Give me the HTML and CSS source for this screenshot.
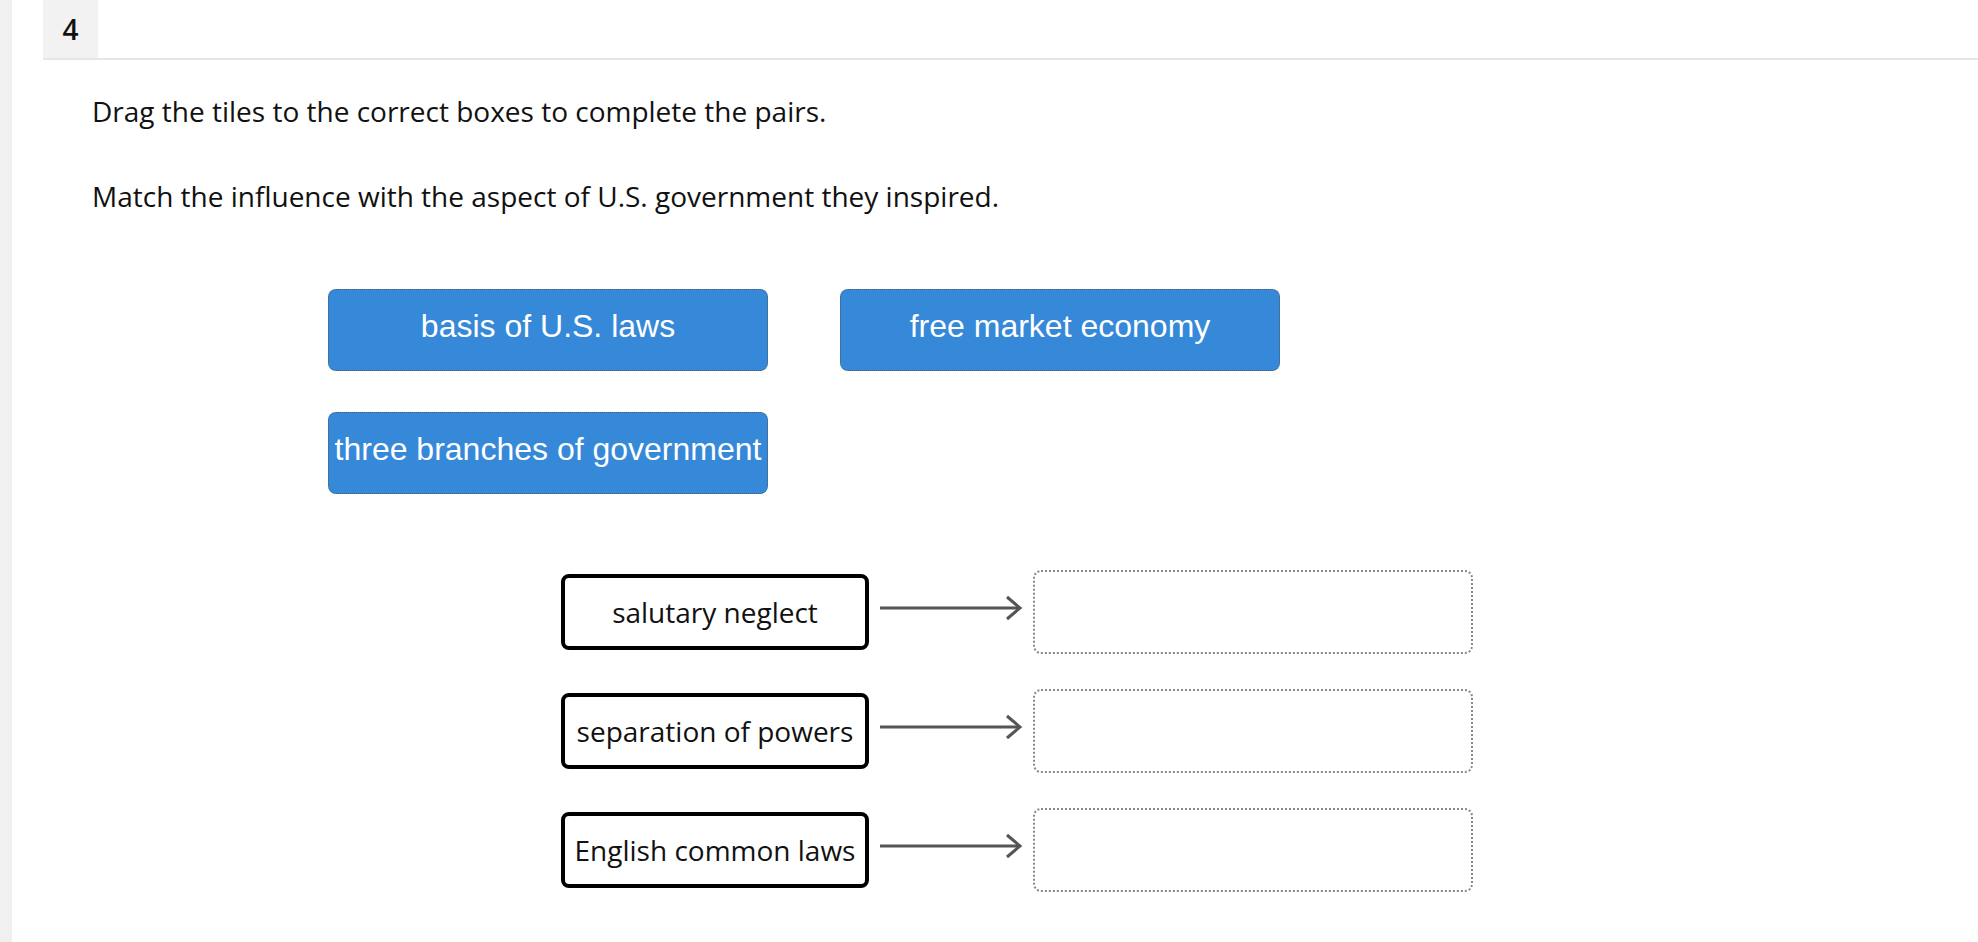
FILE: index.html
```html
<!DOCTYPE html>
<html>
<head>
<meta charset="utf-8">
<link rel="stylesheet" href="styles.css">
</head>
<body>
<div class="strip"></div>
<div class="main">
  <div class="header"><div class="num">4</div></div>
  <div class="content">
    <p class="q q1">Drag the tiles to the correct boxes to complete the pairs.</p>
    <p class="q q2">Match the influence with the aspect of U.S. government they inspired.</p>
    <div class="tiles">
      <div class="tile">basis of U.S. laws</div>
      <div class="tile">free market economy</div>
      <div class="tile">three branches of government</div>
    </div>
    <div class="pairs">
      <div class="pair">
        <div class="term">salutary neglect</div>
        <svg class="arrow" width="144" height="26" viewBox="0 0 144 26"><line x1="1" y1="13" x2="141" y2="13"/><polyline points="128,2 141,13 128,24"/></svg>
        <div class="drop"></div>
      </div>
      <div class="pair">
        <div class="term">separation of powers</div>
        <svg class="arrow" width="144" height="26" viewBox="0 0 144 26"><line x1="1" y1="13" x2="141" y2="13"/><polyline points="128,2 141,13 128,24"/></svg>
        <div class="drop"></div>
      </div>
      <div class="pair">
        <div class="term">English common laws</div>
        <svg class="arrow" width="144" height="26" viewBox="0 0 144 26"><line x1="1" y1="13" x2="141" y2="13"/><polyline points="128,2 141,13 128,24"/></svg>
        <div class="drop"></div>
      </div>
    </div>
  </div>
</div>
</body>
</html>
```
FILE: styles.css
```css
html, body { margin: 0; padding: 0; background: #fff; }
body {
  display: flex;
  min-height: 942px;
  font-family: "Open Sans", "Noto Sans", sans-serif;
  color: #111;
}
.strip { width: 12px; background: #f0f0f0; flex: none; }
.main { flex: 1; padding-left: 31px; }
.header {
  height: 58px;
  border-bottom: 2px solid #e6e6e6;
  display: flex;
}
.num {
  width: 55px;
  background: #f2f2f2;
  display: flex;
  align-items: center;
  justify-content: center;
  font-size: 28px;
  font-weight: 600;
  color: #111;
}
.content { padding-left: 49px; }
.q { margin: 0; font-size: 28px; line-height: 38px; }
.q1 { margin-top: 32px; }
.q2 { margin-top: 47px; }
.tiles {
  margin-top: 74px;
  margin-left: 236px;
  display: grid;
  grid-template-columns: 440px 440px;
  column-gap: 72px;
  row-gap: 41px;
}
.tile {
  height: 82px;
  box-sizing: border-box;
  background: #3689d8;
  border: 1px dotted #4a5a6a;
  border-radius: 8px;
  color: #fff;
  font-family: "Liberation Sans", Arial, sans-serif;
  font-size: 32px;
  display: flex;
  align-items: center;
  justify-content: center;
  padding-bottom: 8px;
  white-space: nowrap;
}
.pairs {
  margin-top: 76px;
  margin-left: 469px;
  display: flex;
  flex-direction: column;
  gap: 35px;
}
.pair { display: flex; align-items: center; height: 84px; }
.term {
  width: 308px;
  height: 76px;
  box-sizing: border-box;
  border: 4px solid #000;
  border-radius: 8px;
  display: flex;
  align-items: center;
  justify-content: center;
  font-size: 28px;
  white-space: nowrap;
  color: #111;
}
.arrow { margin-left: 10px; margin-top: -8px; flex: none; }
.arrow line, .arrow polyline { stroke: #555; stroke-width: 3; fill: none; }
.drop {
  margin-left: 10px;
  width: 440px;
  height: 84px;
  box-sizing: border-box;
  border: 2px dotted #888;
  border-radius: 8px;
}
```
